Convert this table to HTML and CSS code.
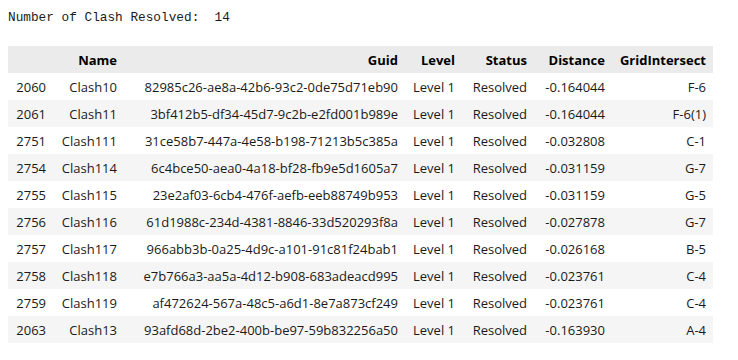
FILE: index.html
```html
<!DOCTYPE html>
<html lang="en">
<head>
  <meta charset="UTF-8">
  <title>Clash Report</title>
  <link rel="stylesheet" href="styles.css">
</head>
<body>
  <pre class="stdout">Number of Clash Resolved:  14</pre>
  <table class="dataframe">
    <colgroup>
      <col class="c-idx">
      <col class="c-name">
      <col class="c-guid">
      <col class="c-level">
      <col class="c-status">
      <col class="c-dist">
      <col class="c-grid">
    </colgroup>
    <thead>
      <tr>
        <th></th>
        <th>Name</th>
        <th>Guid</th>
        <th>Level</th>
        <th>Status</th>
        <th>Distance</th>
        <th>GridIntersect</th>
      </tr>
    </thead>
    <tbody>
      <tr><td>2060</td><td>Clash10</td><td>82985c26-ae8a-42b6-93c2-0de75d71eb90</td><td>Level 1</td><td>Resolved</td><td>-0.164044</td><td>F-6</td></tr>
      <tr><td>2061</td><td>Clash11</td><td>3bf412b5-df34-45d7-9c2b-e2fd001b989e</td><td>Level 1</td><td>Resolved</td><td>-0.164044</td><td>F-6(1)</td></tr>
      <tr><td>2751</td><td>Clash111</td><td>31ce58b7-447a-4e58-b198-71213b5c385a</td><td>Level 1</td><td>Resolved</td><td>-0.032808</td><td>C-1</td></tr>
      <tr><td>2754</td><td>Clash114</td><td>6c4bce50-aea0-4a18-bf28-fb9e5d1605a7</td><td>Level 1</td><td>Resolved</td><td>-0.031159</td><td>G-7</td></tr>
      <tr><td>2755</td><td>Clash115</td><td>23e2af03-6cb4-476f-aefb-eeb88749b953</td><td>Level 1</td><td>Resolved</td><td>-0.031159</td><td>G-5</td></tr>
      <tr><td>2756</td><td>Clash116</td><td>61d1988c-234d-4381-8846-33d520293f8a</td><td>Level 1</td><td>Resolved</td><td>-0.027878</td><td>G-7</td></tr>
      <tr><td>2757</td><td>Clash117</td><td>966abb3b-0a25-4d9c-a101-91c81f24bab1</td><td>Level 1</td><td>Resolved</td><td>-0.026168</td><td>B-5</td></tr>
      <tr><td>2758</td><td>Clash118</td><td>e7b766a3-aa5a-4d12-b908-683adeacd995</td><td>Level 1</td><td>Resolved</td><td>-0.023761</td><td>C-4</td></tr>
      <tr><td>2759</td><td>Clash119</td><td>af472624-567a-48c5-a6d1-8e7a873cf249</td><td>Level 1</td><td>Resolved</td><td>-0.023761</td><td>C-4</td></tr>
      <tr><td>2063</td><td>Clash13</td><td>93afd68d-2be2-400b-be97-59b832256a50</td><td>Level 1</td><td>Resolved</td><td>-0.163930</td><td>A-4</td></tr>
    </tbody>
  </table>
</body>
</html>
```

FILE: styles.css
```css
body {
  margin: 0;
  padding: 10px 8px;
  background: #fff;
  color: #1a1a1a;
}
.stdout {
  margin: 0 0 20px;
  font-family: "Liberation Mono", monospace;
  font-size: 12.75px;
  line-height: 16px;
  color: #1a1a1a;
}
.dataframe {
  border-collapse: collapse;
  table-layout: fixed;
  width: 705px;
  font-family: "Open Sans", sans-serif;
  font-size: 13px;
}
.c-idx { width: 45px; }
.c-name { width: 71px; }
.c-guid { width: 281px; }
.c-level { width: 57px; }
.c-status { width: 72px; }
.c-dist { width: 78px; }
.c-grid { width: 101px; }
.dataframe th,
.dataframe td {
  height: 27px;
  padding: 0 7px;
  text-align: right;
  vertical-align: middle;
  white-space: nowrap;
  box-sizing: border-box;
}
.dataframe thead tr {
  background: #ebebeb;
}
.dataframe th {
  font-weight: bold;
  color: #000;
}
.dataframe tbody tr:nth-child(even) {
  background: #f5f5f5;
}
```
